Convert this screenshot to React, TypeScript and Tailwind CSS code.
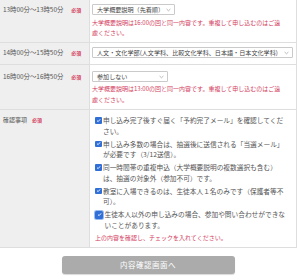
import React from "react";

function Chevron() {
  return (
    <svg width="5" height="4" viewBox="0 0 5 4" className="shrink-0">
      <path d="M0.6 1 L2.5 2.8 L4.4 1" stroke="#9a9a9a" strokeWidth="0.7" fill="none" />
    </svg>
  );
}

function Select({ w, text, clip }: { w: string; text: string; clip?: boolean }) {
  return (
    <div className={`flex items-center h-[11px] border border-[#cacaca] rounded-[1px] bg-white pl-[4px] pr-[3px] gap-[1px] ${w}`}>
      <span
        className={
          clip
            ? "flex-1 overflow-hidden whitespace-nowrap text-[6.1px] leading-[9px] text-[#444]"
            : "flex-1 whitespace-nowrap text-[6.1px] leading-[9px] text-[#444]"
        }
      >
        {text}
      </span>
      <Chevron />
    </div>
  );
}

function Req({ ml }: { ml: string }) {
  return <span className={`text-[5px] font-bold text-[#d4405e] ${ml}`}>必須</span>;
}

function Check({ big }: { big?: boolean }) {
  return (
    <span
      className={
        big
          ? "mt-[1.5px] flex items-center justify-center w-[8px] h-[8px] rounded-[1.5px] bg-[#2f6fd6] ring-1 ring-[#9bbcf0] shrink-0"
          : "mt-[2px] flex items-center justify-center w-[6.5px] h-[6.5px] rounded-[1px] bg-[#2f6fd6] shrink-0"
      }
    >
      <svg width="5" height="5" viewBox="0 0 10 10">
        <path d="M2 5.2 L4.2 7.3 L8.2 2.7" stroke="white" strokeWidth="1.8" fill="none" />
      </svg>
    </span>
  );
}

const items: [string, string][] = [
  ["申し込み完了後すぐ届く「予約完了メール」を確認してくだ", "さい。"],
  ["申し込み多数の場合は、抽選後に送信される「当選メール」", "が必要です（3/12送信）。"],
  ["同一時間帯の重複申込（大学概要説明の複数選択も含む）", "は、抽選の対象外（参加不可）です。"],
  ["教室に入場できるのは、生徒本人１名のみです（保護者等不", "可）。"],
  ["生徒本人以外の申し込みの場合、参加や問い合わせができな", "いことがあります。"],
];

export default function App() {
  return (
    <div className="w-[300px] h-[280px] overflow-hidden bg-white font-['Noto_Sans_CJK_JP',sans-serif] text-[#555]">
      <div className="w-[297px] border-r border-b border-[#dedede] -mt-[2px]">
        {/* Row 1 */}
        <div className="flex border-b border-[#dedede]">
          <div className="w-[90px] shrink-0 bg-[#efefef] border-r border-[#dedede] pl-[3px] pt-[6px] flex items-start">
            <span className="text-[6.4px] leading-[11px] whitespace-nowrap">13時00分～13時50分</span>
            <Req ml="ml-[8px] leading-[11px]" />
          </div>
          <div className="flex-1 bg-white pl-[2px] pt-[6px] pb-[4px]">
            <Select w="w-[83px]" text="大学概要説明（先着順）" />
            <div className="mt-[3px] text-[6px] leading-[10px] text-[#d4405e] whitespace-nowrap">
              大学概要説明は16:00の回と同一内容です。重複して申し込むのはご遠
              <br />
              慮ください。
            </div>
          </div>
        </div>
        {/* Row 2 */}
        <div className="flex border-b border-[#dedede]">
          <div className="w-[90px] shrink-0 bg-[#efefef] border-r border-[#dedede] pl-[3px] pt-[4px] flex items-start">
            <span className="text-[6.4px] leading-[11px] whitespace-nowrap">14時00分～15時50分</span>
            <Req ml="ml-[8px] leading-[11px]" />
          </div>
          <div className="flex-1 bg-white pl-[2px] pt-[4px] pb-[6px]">
            <Select clip w="w-[201px]" text="人文・文化学部(人文学科、比較文化学科、日本語・日本文化学科)" />
          </div>
        </div>
        {/* Row 3 */}
        <div className="flex border-b border-[#dedede]">
          <div className="w-[90px] shrink-0 bg-[#efefef] border-r border-[#dedede] pl-[3px] pt-[6px] flex items-start">
            <span className="text-[6.4px] leading-[11px] whitespace-nowrap">16時00分～16時50分</span>
            <Req ml="ml-[8px] leading-[11px]" />
          </div>
          <div className="flex-1 bg-white pl-[2px] pt-[6px] pb-[4px]">
            <Select w="w-[76px]" text="参加しない" />
            <div className="mt-[2px] text-[6px] leading-[10.5px] text-[#d4405e] whitespace-nowrap">
              大学概要説明は13:00の回と同一内容です。重複して申し込むのはご遠
              <br />
              慮ください。
            </div>
          </div>
        </div>
        {/* Row 4 */}
        <div className="flex">
          <div className="w-[90px] shrink-0 bg-[#efefef] border-r border-[#dedede] pl-[3px] pt-[5px] flex items-start">
            <span className="text-[6px] leading-[10.5px] whitespace-nowrap">確認事項</span>
            <Req ml="ml-[5px] leading-[10.5px]" />
          </div>
          <div className="flex-1 bg-white pl-[5px] pt-[5px] pb-[4px]">
            <div className="flex flex-col gap-[2.5px]">
              {items.map((it, i) => (
                <div key={i} className="flex gap-[1.5px]">
                  <Check big={i === 4} />
                  <div className="text-[6.7px] leading-[10.5px] whitespace-nowrap text-[#555]">
                    {it[0]}
                    <br />
                    {it[1]}
                  </div>
                </div>
              ))}
            </div>
            <div className="mt-[3px] text-[6px] leading-[10px] text-[#d4405e] whitespace-nowrap">
              上の内容を確認し、チェックを入れてください。
            </div>
          </div>
        </div>
      </div>
      <div className="flex justify-center pt-[8px] pr-[4px]">
        <div className="w-[173px] h-[18px] rounded-[3px] bg-[#ababab] flex items-center justify-center text-white text-[7.5px] tracking-[0.5px] shadow-[0_1px_1px_rgba(0,0,0,0.15)]">
          内容確認画面へ
        </div>
      </div>
    </div>
  );
}
